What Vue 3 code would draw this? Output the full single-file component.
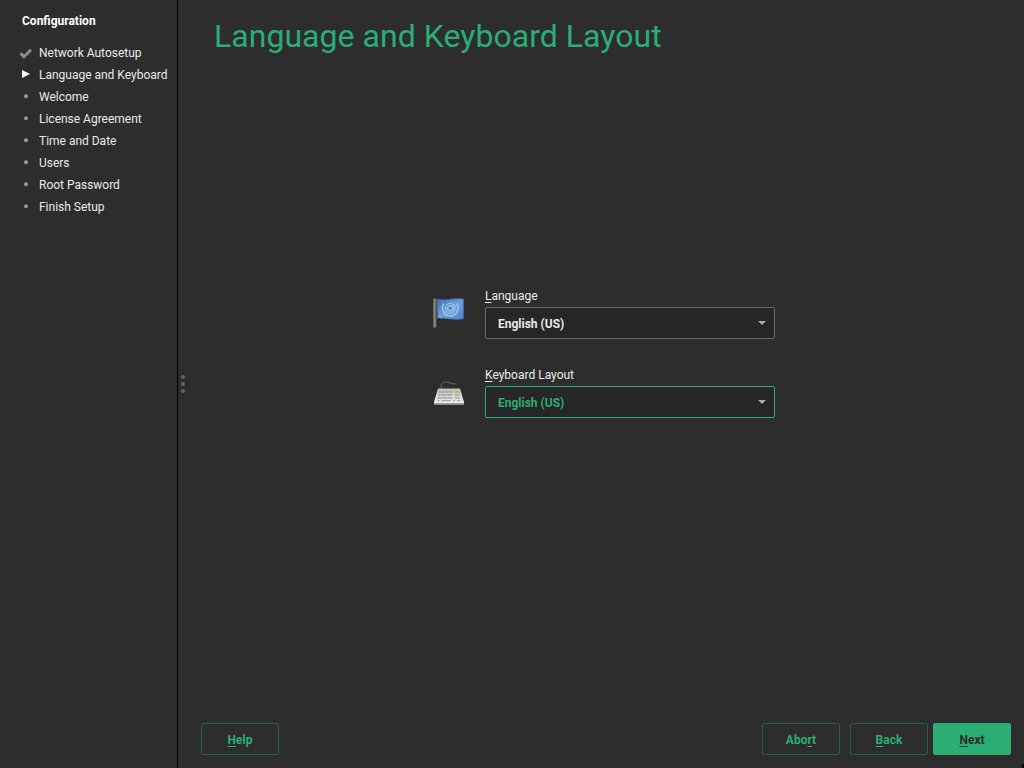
<script setup>
const steps = [
  { label: 'Network Autosetup', state: 'done' },
  { label: 'Language and Keyboard', state: 'current' },
  { label: 'Welcome', state: 'todo' },
  { label: 'License Agreement', state: 'todo' },
  { label: 'Time and Date', state: 'todo' },
  { label: 'Users', state: 'todo' },
  { label: 'Root Password', state: 'todo' },
  { label: 'Finish Setup', state: 'todo' },
]
const keyRows = [
  [6, 16.5], [5.5, 19.5], [5, 22.5],
]
</script>

<template>
  <div class="installer">
    <aside class="sidebar">
      <h2 class="side-title">Configuration</h2>
      <ul class="steps">
        <li v-for="s in steps" :key="s.label" class="step">
          <span class="mark">
            <svg v-if="s.state === 'done'" width="14" height="12" viewBox="0 0 14 12"><path d="M1.500 6.300 5 9.700 12 2.700" fill="none" stroke="#8c8c8c" stroke-width="3" /></svg>
            <svg v-else-if="s.state === 'current'" width="14" height="12" viewBox="0 0 14 12"><path d="M3 1 11 5 3 9Z" fill="#fff" /></svg>
            <svg v-else width="14" height="12" viewBox="0 0 14 12"><circle cx="7" cy="5.200" r="2" fill="#999" /></svg>
          </span>
          <span>{{ s.label }}</span>
        </li>
      </ul>
    </aside>
    <div class="splitter"><i></i><i></i><i></i></div>
    <main class="content">
      <h1 class="title">Language and Keyboard Layout</h1>
      <section class="form">
        <div class="row">
          <svg class="icon" width="32" height="32" viewBox="0 0 32 32">
            <defs>
              <linearGradient id="flag" x1="0" y1="0" x2="1" y2="1">
                <stop offset="0" stop-color="#386fb0" /><stop offset=".5" stop-color="#6da0d8" /><stop offset="1" stop-color="#5288ca" />
              </linearGradient>
              <linearGradient id="pole"><stop offset="0" stop-color="#5a5a58" /><stop offset=".4" stop-color="#858581" /><stop offset="1" stop-color="#555553" /></linearGradient>
            </defs>
            <path d="M4 3Q10 4.500 17 3.300T30.500 3V22.800Q24 24 17 23T4.500 22.200Z" fill="url(#flag)" stroke="#3768a5" stroke-width=".7" />
            <g fill="none" stroke="#a8cbee">
              <path d="M11 7.500C7.500 11.500 10 19.500 17.300 20C24.500 19.500 27 11.500 23.500 7.500" stroke-width="1.700" opacity=".75" />
              <circle cx="17.300" cy="12.300" r="5" stroke-width="1.200" opacity=".75" />
              <circle cx="17.300" cy="12.300" r="2.600" stroke-width="1.600" stroke-dasharray="2.500 .8" />
            </g>
            <circle cx="17.300" cy="12.300" r="1.200" fill="#3d73b2" />
            <rect x="0" y="2.500" width="3.700" height="29" rx="1" fill="url(#pole)" />
            <path d="M4.500 28.500V25L7 22" fill="none" stroke="#1e1e1e" stroke-width="1" />
            <path d="M7 19v3" stroke="#aaa" stroke-width="1" />
          </svg>
          <div class="field">
            <label class="label"><u>L</u>anguage</label>
            <div class="select"><span>English (US)</span><svg width="8" height="4" viewBox="0 0 8 4"><path d="M0 0H8L4 4Z" fill="#aaa" /></svg></div>
          </div>
        </div>
        <div class="row">
          <svg class="icon" width="32" height="32" viewBox="0 0 32 32">
            <defs><linearGradient id="board" x1="0" y1="0" x2="0" y2="1"><stop offset="0" stop-color="#bdbdba" /><stop offset="1" stop-color="#f0f0ee" /></linearGradient></defs>
            <path d="M8.500 13.500C7.500 10 8.500 7.500 12 7C16 6.500 18 9.800 23.500 8.800" fill="none" stroke="#666" stroke-width="1" />
            <path d="M5 13.500H27L31 27V29H1V27Z" fill="url(#board)" />
            <path d="M1 28H31V29.800H1Z" fill="#9d9d9b" />
            <g fill="none" stroke="#9b9b98" stroke-width="1.500" stroke-dasharray="1.800 .6">
              <path v-for="r in keyRows" :key="r[1]" :d="`M${r[0]} ${r[1] + .5}H19.500M22 ${r[1] + .5}H27`" />
            </g>
            <path d="M4.500 25.700H6.500M8.500 25.700H18M20 25.700H22M24 25.700H27.500" stroke="#999" stroke-width="1" />
            <path d="M21 15.500H23M24.300 15.500H26.500" stroke="#d8d83c" stroke-width="1.800" />
          </svg>
          <div class="field">
            <label class="label"><u>K</u>eyboard Layout</label>
            <div class="select focused"><span>English (US)</span><svg width="8" height="4" viewBox="0 0 8 4"><path d="M0 0H8L4 4Z" fill="#aaa" /></svg></div>
          </div>
        </div>
      </section>
      <footer class="buttons">
        <button class="btn help"><u>H</u>elp</button>
        <button class="btn abort">Abo<u>r</u>t</button>
        <button class="btn back"><u>B</u>ack</button>
        <button class="btn primary"><u>N</u>ext</button>
      </footer>
    </main>
    <svg class="pointer" width="2" height="4" viewBox="0 0 2 4"><path d="M0 1 2 0V4H0Z" fill="#000" /></svg>
  </div>
</template>

<style>
body { margin: 0; background: #2d2d2d; overflow: hidden; }
</style>
<style scoped>
.installer { position: relative; display: flex; width: 1024px; height: 768px; background: #2d2d2d; color: #eaeaea; font: 12px/14px Roboto, sans-serif; }
.sidebar { box-sizing: border-box; width: 178px; border-right: 1px solid #000; padding-top: 14px; }
.side-title { margin: 0 0 14px 22px; font-size: 12px; line-height: 14px; font-weight: 700; color: #fff; }
.steps { list-style: none; margin: 0; padding: 0 0 0 19px; letter-spacing: -0.01px; }
.step { display: flex; align-items: center; height: 22px; white-space: nowrap; }
.mark { width: 20px; height: 12px; }
.mark svg { display: block; }
.splitter { width: 10px; display: flex; flex-direction: column; align-items: center; justify-content: center; gap: 3px; }
.splitter i { width: 4px; height: 4px; border-radius: 50%; background: #666; }
.content { flex: 1; display: flex; flex-direction: column; }
.title { margin: 17px 0 0 26px; font-size: 32px; line-height: 38px; font-weight: 400; letter-spacing: 0.035px; color: #2aae73; }
.form { margin: 234px 0 0 245px; display: flex; flex-direction: column; gap: 29px; }
.row { display: flex; align-items: center; gap: 20px; height: 50px; }
.icon { flex: none; margin-top: -4px; }
.label { display: block; line-height: 14px; margin-bottom: 4px; }
u { text-decoration: underline 1px; text-underline-offset: 2px; text-decoration-skip-ink: none; }
.select { box-sizing: border-box; width: 290px; height: 32px; display: flex; align-items: center; justify-content: space-between; padding: 2px 8px 0 12px; border: 1px solid #666; border-radius: 2px; background: #262626; font-weight: 700; }
.select svg { margin-top: -2px; }
.focused { border-color: #2aae73; color: #2aae73; }
.buttons { display: flex; margin: auto 13px 13px 13px; }
.btn { box-sizing: border-box; width: 78px; height: 32px; padding: 2px 0 0; border: 1px solid #196346; border-radius: 2px; background: #2d2d2d; color: #2aae73; font: 700 12px/14px Roboto, sans-serif; }
.help { margin-right: auto; }
.abort { margin-right: 10px; }
.back { margin-right: 5px; }
.primary { background: #2aae73; border-color: #2aae73; color: #2d2d2d; }
.pointer { position: absolute; right: 0; bottom: 0; }
</style>
